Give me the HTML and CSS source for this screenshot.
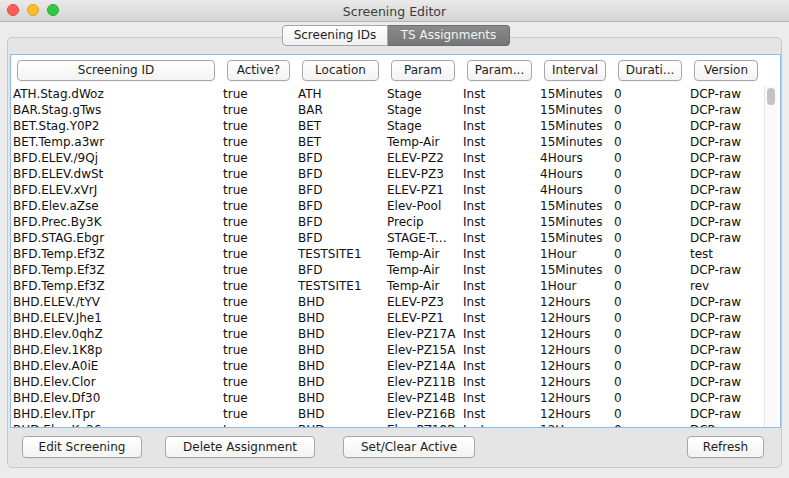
FILE: index.html
```html
<!DOCTYPE html>
<html>
<head>
<meta charset="utf-8">
<title>Screening Editor</title>
<link rel="stylesheet" href="styles.css">
</head>
<body>
<div class="window">
  <div class="titlebar">
    <div class="lights">
      <span class="light red"></span>
      <span class="light yellow"></span>
      <span class="light green"></span>
    </div>
    <div class="title">Screening Editor</div>
  </div>

  <div class="tabs">
    <div class="tab">Screening IDs</div>
    <div class="tab selected">TS Assignments</div>
  </div>

  <div class="panel">
    <div class="scrollpane">
      <div class="header row">
        <div class="hcell"><button class="hbtn">Screening ID</button></div>
        <div class="hcell"><button class="hbtn">Active?</button></div>
        <div class="hcell"><button class="hbtn">Location</button></div>
        <div class="hcell"><button class="hbtn">Param</button></div>
        <div class="hcell"><button class="hbtn">Param...</button></div>
        <div class="hcell"><button class="hbtn">Interval</button></div>
        <div class="hcell"><button class="hbtn">Durati...</button></div>
        <div class="hcell"><button class="hbtn">Version</button></div>
      </div>
      <div class="body">
        <div class="rows">
          <div class="row"><span>ATH.Stag.dWoz</span><span>true</span><span>ATH</span><span>Stage</span><span>Inst</span><span>15Minutes</span><span>0</span><span>DCP-raw</span></div>
          <div class="row"><span>BAR.Stag.gTws</span><span>true</span><span>BAR</span><span>Stage</span><span>Inst</span><span>15Minutes</span><span>0</span><span>DCP-raw</span></div>
          <div class="row"><span>BET.Stag.Y0P2</span><span>true</span><span>BET</span><span>Stage</span><span>Inst</span><span>15Minutes</span><span>0</span><span>DCP-raw</span></div>
          <div class="row"><span>BET.Temp.a3wr</span><span>true</span><span>BET</span><span>Temp-Air</span><span>Inst</span><span>15Minutes</span><span>0</span><span>DCP-raw</span></div>
          <div class="row"><span>BFD.ELEV./9Qj</span><span>true</span><span>BFD</span><span>ELEV-PZ2</span><span>Inst</span><span>4Hours</span><span>0</span><span>DCP-raw</span></div>
          <div class="row"><span>BFD.ELEV.dwSt</span><span>true</span><span>BFD</span><span>ELEV-PZ3</span><span>Inst</span><span>4Hours</span><span>0</span><span>DCP-raw</span></div>
          <div class="row"><span>BFD.ELEV.xVrJ</span><span>true</span><span>BFD</span><span>ELEV-PZ1</span><span>Inst</span><span>4Hours</span><span>0</span><span>DCP-raw</span></div>
          <div class="row"><span>BFD.Elev.aZse</span><span>true</span><span>BFD</span><span>Elev-Pool</span><span>Inst</span><span>15Minutes</span><span>0</span><span>DCP-raw</span></div>
          <div class="row"><span>BFD.Prec.By3K</span><span>true</span><span>BFD</span><span>Precip</span><span>Inst</span><span>15Minutes</span><span>0</span><span>DCP-raw</span></div>
          <div class="row"><span>BFD.STAG.Ebgr</span><span>true</span><span>BFD</span><span>STAGE-T...</span><span>Inst</span><span>15Minutes</span><span>0</span><span>DCP-raw</span></div>
          <div class="row"><span>BFD.Temp.Ef3Z</span><span>true</span><span>TESTSITE1</span><span>Temp-Air</span><span>Inst</span><span>1Hour</span><span>0</span><span>test</span></div>
          <div class="row"><span>BFD.Temp.Ef3Z</span><span>true</span><span>BFD</span><span>Temp-Air</span><span>Inst</span><span>15Minutes</span><span>0</span><span>DCP-raw</span></div>
          <div class="row"><span>BFD.Temp.Ef3Z</span><span>true</span><span>TESTSITE1</span><span>Temp-Air</span><span>Inst</span><span>1Hour</span><span>0</span><span>rev</span></div>
          <div class="row"><span>BHD.ELEV./tYV</span><span>true</span><span>BHD</span><span>ELEV-PZ3</span><span>Inst</span><span>12Hours</span><span>0</span><span>DCP-raw</span></div>
          <div class="row"><span>BHD.ELEV.Jhe1</span><span>true</span><span>BHD</span><span>ELEV-PZ1</span><span>Inst</span><span>12Hours</span><span>0</span><span>DCP-raw</span></div>
          <div class="row"><span>BHD.Elev.0qhZ</span><span>true</span><span>BHD</span><span>Elev-PZ17A</span><span>Inst</span><span>12Hours</span><span>0</span><span>DCP-raw</span></div>
          <div class="row"><span>BHD.Elev.1K8p</span><span>true</span><span>BHD</span><span>Elev-PZ15A</span><span>Inst</span><span>12Hours</span><span>0</span><span>DCP-raw</span></div>
          <div class="row"><span>BHD.Elev.A0iE</span><span>true</span><span>BHD</span><span>Elev-PZ14A</span><span>Inst</span><span>12Hours</span><span>0</span><span>DCP-raw</span></div>
          <div class="row"><span>BHD.Elev.Clor</span><span>true</span><span>BHD</span><span>Elev-PZ11B</span><span>Inst</span><span>12Hours</span><span>0</span><span>DCP-raw</span></div>
          <div class="row"><span>BHD.Elev.Df30</span><span>true</span><span>BHD</span><span>Elev-PZ14B</span><span>Inst</span><span>12Hours</span><span>0</span><span>DCP-raw</span></div>
          <div class="row"><span>BHD.Elev.ITpr</span><span>true</span><span>BHD</span><span>Elev-PZ16B</span><span>Inst</span><span>12Hours</span><span>0</span><span>DCP-raw</span></div>
          <div class="row"><span>BHD.Elev.Kc36</span><span>true</span><span>BHD</span><span>Elev-PZ18B</span><span>Inst</span><span>12Hours</span><span>0</span><span>DCP-raw</span></div>
        </div>
        <div class="vscroll"><div class="thumb"></div></div>
      </div>
    </div>

    <div class="actions">
      <button class="btn w-edit">Edit Screening</button>
      <button class="btn w-delete">Delete Assignment</button>
      <button class="btn w-active">Set/Clear Active</button>
      <div class="spacer"></div>
      <button class="btn w-refresh">Refresh</button>
    </div>
  </div>
</div>
</body>
</html>
```

FILE: styles.css
```css
* { box-sizing: border-box; }

html, body {
  margin: 0;
  padding: 0;
}

body {
  width: 789px;
  height: 478px;
  overflow: hidden;
  background: #ececec;
  font-family: "DejaVu Sans", "Liberation Sans", sans-serif;
  font-size: 12px;
  color: #111111;
}

.window {
  width: 789px;
  height: 478px;
  display: flex;
  flex-direction: column;
}

.titlebar {
  height: 22px;
  flex: none;
  display: flex;
  align-items: center;
  background: linear-gradient(#eaeaea, #d4d4d4);
  border-bottom: 1px solid #b5b5b5;
  position: relative;
}

.lights {
  display: flex;
  gap: 8px;
  padding-left: 7px;
  position: absolute;
  left: 0;
  top: 4px;
}

.light {
  width: 12px;
  height: 12px;
  border-radius: 50%;
  display: block;
}

.light.red { background: #fc5f57; border: 1px solid #e2463f; }
.light.yellow { background: #fdbc2e; border: 1px solid #e1a116; }
.light.green { background: #33c748; border: 1px solid #27aa35; }

.title {
  flex: 1;
  text-align: center;
  font-size: 12.5px;
  color: #3c3c3c;
  padding-top: 1px;
}

.tabs {
  margin-top: 3px;
  display: flex;
  justify-content: center;
  position: relative;
  z-index: 1;
  padding-left: 3px;
}

.tab {
  height: 21px;
  line-height: 19px;
  font-size: 12px;
  padding: 0 8px;
  border: 1px solid #a6a6a6;
  background: linear-gradient(#ffffff, #f1f1f1);
  color: #1e1e1e;
  border-radius: 4px 0 0 4px;
  width: 106px;
  text-align: center;
}

.tab.selected {
  width: 122px;
  background: linear-gradient(#8a8a8a, #767676);
  border-color: #6d6d6d;
  color: #f4f4f4;
  border-radius: 0 4px 4px 0;
  border-left: none;
}

.panel {
  margin: -9px 7px 0 7px;
  height: 431px;
  border: 1px solid #c9c9c9;
  border-radius: 5px;
  background: #e5e5e5;
  padding: 16px 0 0 2px;
  display: flex;
  flex-direction: column;
}

.scrollpane {
  width: 771px;
  height: 374px;
  border: 1px solid #8fbbe8;
  background: #ffffff;
  display: flex;
  flex-direction: column;
  overflow: hidden;
}

.row {
  display: grid;
  grid-template-columns: 210px 75px 89px 76px 77px 74px 76px 76px;
  height: 16px;
  line-height: 16px;
  white-space: nowrap;
}

.row span {
  padding-left: 2px;
  overflow: hidden;
}

.header.row {
  height: 31px;
  flex: none;
}

.hcell {
  padding: 5px 6px 0 6px;
}

.hbtn, .btn {
  font-family: "DejaVu Sans", "Liberation Sans", sans-serif;
  font-size: 12px;
  color: #1e1e1e;
  background: linear-gradient(#ffffff, #f3f3f3);
  border: 1px solid #a7a7a7;
  border-radius: 4px;
  padding: 0;
  margin: 0;
  box-shadow: 0 1px 0 rgba(0,0,0,0.04);
}

.hbtn {
  width: 100%;
  height: 21px;
  line-height: 19px;
}

.body {
  flex: 1;
  display: flex;
  overflow: hidden;
}

.rows {
  width: 753px;
  flex: none;
}

.vscroll {
  width: 15px;
  flex: none;
  background: #fafafa;
  border-left: 1px solid #e6e6e6;
  padding: 2px 0 0 2px;
}

.thumb {
  width: 8px;
  height: 17px;
  border-radius: 4px;
  background: #c3c3c3;
}

.actions {
  display: flex;
  padding: 8px 17px 0 12px;
}

.btn {
  height: 22px;
  line-height: 20px;
  text-align: center;
}

.w-edit { width: 120px; }
.w-delete { width: 150px; margin-left: 23px; }
.w-active { width: 132px; margin-left: 28px; }
.w-refresh { width: 77px; }

.spacer { flex: 1; }
```
